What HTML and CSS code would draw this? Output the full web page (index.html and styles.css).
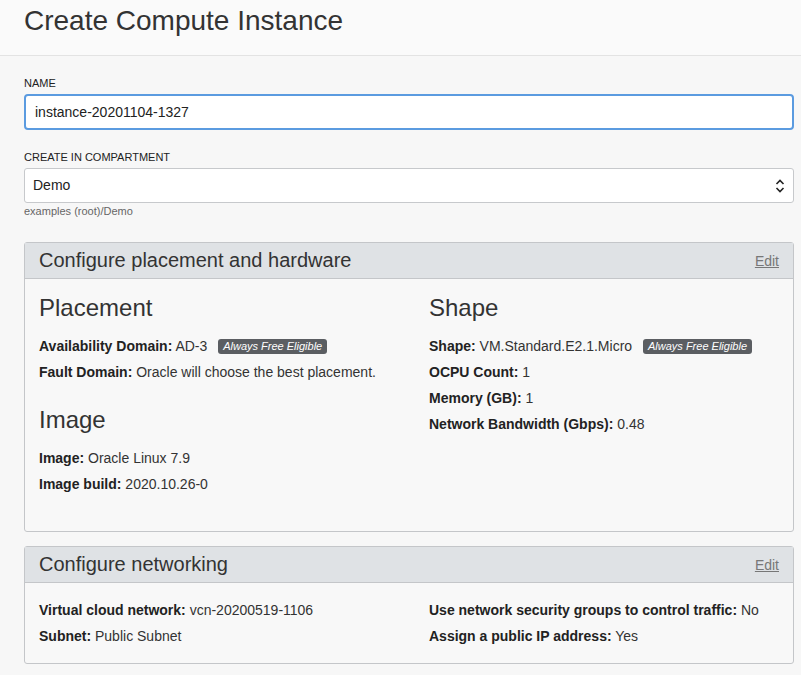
FILE: index.html
```html
<!DOCTYPE html>
<html>
<head>
<meta charset="utf-8">
<link rel="stylesheet" href="styles.css">
</head>
<body>
<header class="page-header">
  <h1 class="page-title">Create Compute Instance</h1>
</header>
<main class="content">
  <div class="field">
    <label class="field-label">NAME</label>
    <div class="text-input">instance-20201104-1327</div>
  </div>
  <div class="field field-compartment">
    <label class="field-label">CREATE IN COMPARTMENT</label>
    <div class="select-input">
      <span>Demo</span>
      <svg class="select-arrow" width="10" height="16" viewBox="0 0 10 16">
        <path d="M1.5 6 L5 2.5 L8.5 6" fill="none" stroke="#222" stroke-width="1.6"/>
        <path d="M1.5 10 L5 13.5 L8.5 10" fill="none" stroke="#222" stroke-width="1.6"/>
      </svg>
    </div>
    <div class="help-text">examples (root)/Demo</div>
  </div>

  <section class="panel">
    <div class="panel-header">
      <h2 class="panel-title">Configure placement and hardware</h2>
      <a class="edit-link">Edit</a>
    </div>
    <div class="panel-body panel-body-hw">
      <div class="col">
        <h3 class="section-title">Placement</h3>
        <div class="rows">
          <div class="row"><b>Availability Domain:</b> AD-3 <span class="badge">Always Free Eligible</span></div>
          <div class="row"><b>Fault Domain:</b> Oracle will choose the best placement.</div>
        </div>
        <h3 class="section-title section-second">Image</h3>
        <div class="rows">
          <div class="row"><b>Image:</b> Oracle Linux 7.9</div>
          <div class="row"><b>Image build:</b> 2020.10.26-0</div>
        </div>
      </div>
      <div class="col">
        <h3 class="section-title">Shape</h3>
        <div class="rows">
          <div class="row"><b>Shape:</b> VM.Standard.E2.1.Micro <span class="badge">Always Free Eligible</span></div>
          <div class="row"><b>OCPU Count:</b> 1</div>
          <div class="row"><b>Memory (GB):</b> 1</div>
          <div class="row"><b>Network Bandwidth (Gbps):</b> 0.48</div>
        </div>
      </div>
    </div>
  </section>

  <section class="panel panel-network">
    <div class="panel-header">
      <h2 class="panel-title">Configure networking</h2>
      <a class="edit-link">Edit</a>
    </div>
    <div class="panel-body panel-body-net">
      <div class="col">
        <div class="row"><b>Virtual cloud network:</b> vcn-20200519-1106</div>
        <div class="row"><b>Subnet:</b> Public Subnet</div>
      </div>
      <div class="col">
        <div class="row"><b>Use network security groups to control traffic:</b> No</div>
        <div class="row"><b>Assign a public IP address:</b> Yes</div>
      </div>
    </div>
  </section>
</main>
</body>
</html>
```

FILE: styles.css
```css
* { box-sizing: border-box; }
html, body {
  margin: 0;
  padding: 0;
  background: #f7f7f7;
  font-family: "Liberation Sans", Arial, sans-serif;
  color: #333;
}
.page-header {
  height: 56px;
  background: #fafafa;
  border-bottom: 1px solid #e3e3e3;
  padding: 4px 24px 0;
}
.page-title {
  margin: 0;
  font-size: 28px;
  line-height: 34px;
  font-weight: normal;
  color: #333;
}
.content {
  padding: 21px 7px 20px 24px;
}
.field { display: flex; flex-direction: column; }
.field-label {
  font-size: 11px;
  line-height: 13px;
  color: #222;
  margin-bottom: 4px;
}
.text-input {
  height: 36px;
  background: #fff;
  border: 2px solid #5b9be0;
  border-radius: 4px;
  padding: 0 9px;
  font-size: 14px;
  line-height: 32px;
  color: #222;
}
.field-compartment { margin-top: 21px; }
.select-input {
  height: 35px;
  background: #fff;
  border: 1px solid #c7c9cc;
  border-radius: 3px;
  padding: 0 8px 0 8px;
  font-size: 14px;
  line-height: 33px;
  color: #222;
  display: flex;
  justify-content: space-between;
  align-items: center;
}
.help-text {
  font-size: 11px;
  line-height: 13px;
  color: #666;
  margin-top: 2px;
}
.panel {
  margin-top: 24px;
  border: 1px solid #c4c6c9;
  border-radius: 3px;
  background: #f8f8f8;
}
.panel-network { margin-top: 14px; }
.panel-header {
  height: 36px;
  background: #dfe2e5;
  border-bottom: 1px solid #c4c6c9;
  display: flex;
  justify-content: space-between;
  align-items: center;
  padding: 0 14px;
}
.panel-title {
  margin: 0;
  font-size: 20px;
  font-weight: normal;
  line-height: 35px;
  color: #333;
}
.edit-link {
  font-size: 14px;
  color: #777;
  text-decoration: underline;
}
.panel-body {
  display: grid;
  grid-template-columns: 1fr 1fr;
  column-gap: 40px;
  padding: 15px 14px 34px 14px;
}
.panel-body-net { padding: 14px 14px 14px 14px; }
.section-title {
  margin: 0 0 11px;
  font-size: 24px;
  line-height: 28px;
  font-weight: normal;
  color: #333;
}
.section-second { margin-top: 21px; }
.row {
  font-size: 14px;
  line-height: 26px;
  color: #333;
  white-space: nowrap;
}
.row b { color: #222; font-weight: bold; }
.badge {
  display: inline-block;
  margin-left: 7px;
  background: #5b5e62;
  color: #fff;
  font-size: 11px;
  font-style: italic;
  line-height: 15px;
  padding: 0 5px;
  border-radius: 3px;
  vertical-align: 1px;
}
```
